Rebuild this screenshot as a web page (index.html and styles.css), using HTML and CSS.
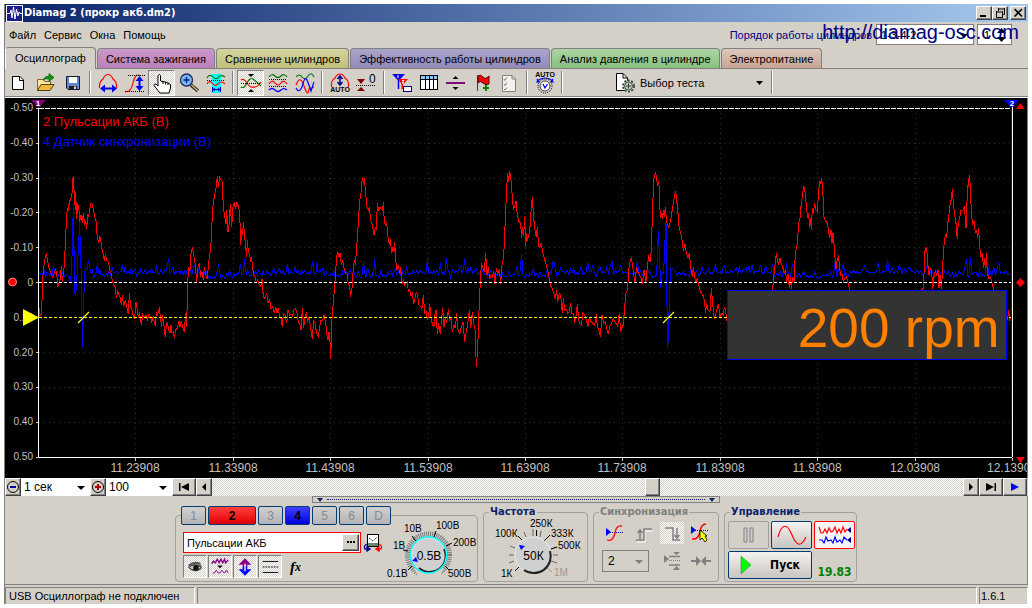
FILE: index.html
```html
<!DOCTYPE html>
<html lang="ru">
<head>
<meta charset="utf-8">
<title>Diamag 2 (прокр акб.dm2)</title>
<link rel="stylesheet" href="styles.css">
</head>
<body>
<div class="window">
  <header class="titlebar">
    <svg class="logo" width="17" height="17" viewBox="0 0 17 17"><rect width="17" height="17" fill="#fff"/><rect x="1" y="1" width="15" height="15" fill="#1c1c8c"/><path d="M1 8.500H4L5 5L6 13L7.500 2L9 14L10.500 4L12 11L13 7L14 8.500H16" fill="none" stroke="#fff"/></svg>
    <h1>Diamag 2 (прокр акб.dm2)</h1>
    <button class="cap" aria-label="Свернуть"><svg width="11" height="10"><path d="M1 8H7" stroke="#000" stroke-width="2"/></svg></button>
    <button class="cap" aria-label="Восстановить"><svg width="11" height="10"><path d="M3 1H10M3.500 0V3M9.500 0V6.500H7M1 4H8M1.500 3V9.500H7.500V3" fill="none" stroke="#000"/></svg></button>
    <button class="cap close" aria-label="Закрыть"><svg width="11" height="10"><path d="M1.500 1L9 8.500M9 1L1.500 8.500" stroke="#000" stroke-width="1.600"/></svg></button>
  </header>

  <div class="menubar">
    <nav class="menu"><button>Файл</button><button>Сервис</button><button>Окна</button><button>Помощь</button></nav>
    <label class="order" for="order">Порядок работы цилиндров</label>
    <span class="combo sunk order-box"><select id="order"><option>1-3-4-2</option></select></span>
    <span class="sunk spin"><input type="text" value="1" aria-label="Номер цилиндра"><svg width="9" height="14"><path d="M4.500 0L9 5H0ZM4.500 14L9 9H0Z"/></svg></span>
    <a class="site" href="#">http://diamag-osc.com</a>
  </div>

  <nav class="tabs">
    <button class="tab active">Осциллограф</button>
    <button class="tab pink">Система зажигания</button>
    <button class="tab olive">Сравнение цилиндров</button>
    <button class="tab violet">Эффективность работы цилиндров</button>
    <button class="tab green">Анализ давления в цилиндре</button>
    <button class="tab brown">Электропитание</button>
  </nav>

  <div class="toolbar">
    <button class="tool" aria-label="Новый"><svg viewBox="0 0 24 24"><path d="M5.500 5.500H13L16.500 9V18.500H5.500Z" fill="#fff" stroke="#000"/><path d="M12.500 5.500V9.500H16.500" fill="none" stroke="#000"/></svg></button>
    <button class="tool" aria-label="Открыть"><svg viewBox="0 0 24 24"><path d="M3.500 19V8.500H9L10.500 10.500H16.500V13" fill="#ffe89c" stroke="#806020"/><path d="M3.500 19.500L7 13.500H20L16 19.500Z" fill="#f0b840" stroke="#504010"/><path d="M9 9Q11 5 15 5V2.500L20 6.500L15 10.500V8Q12 7 9 9Z" fill="#0a960a" stroke="#004c00" stroke-width=".6"/></svg></button>
    <button class="tool" aria-label="Сохранить"><svg viewBox="0 0 24 24"><path d="M5.500 5.500H18.500V18.500H7L5.500 17Z" fill="#6088c8" stroke="#101838"/><rect x="8" y="6" width="8" height="6" fill="#fff"/><path d="M8 15H16V18.500H8Z" fill="#202020"/><path d="M13 15.500H15V18H13Z" fill="#ddd"/></svg></button>
    <i class="sep"></i>
    <button class="tool" aria-label="Размах по горизонтали"><svg viewBox="0 0 24 24"><path d="M3.500 17V14Q4 10 7 8Q9 3.500 12 3.500T17 8Q20 10 20.500 14V17" fill="none" stroke="#f00" stroke-width="1.200"/><path d="M6 17.500H19" stroke="#00e" stroke-width="2"/><path d="M4 17.500L9 13.500V21.500ZM21 17.500L16 13.500V21.500Z" fill="#00e"/></svg></button>
    <button class="tool" aria-label="Размах по вертикали"><svg viewBox="0 0 24 24"><path d="M2 20.500Q8 22 10 12T17 4.500" fill="none" stroke="#f00" stroke-width="1.200"/><path d="M5 4.500H22M2 20.500H22" stroke="#000" stroke-dasharray="1 1"/><path d="M16.500 7V18" stroke="#00e" stroke-width="2"/><path d="M16.500 5L12.500 10H20.500ZM16.500 20L12.500 15H20.500Z" fill="#00e"/></svg></button>
    <button class="tool pressed" aria-label="Рука"><svg viewBox="0 0 24 24"><path d="M8 13V4.500Q9.500 2.500 10.500 4.500V10L13 10.500L15.500 11L18 12L20.500 13.500V17L19 22H10L4 14.500Q4 12.500 6 13L8 15Z" fill="#fff" stroke="#000"/><path d="M13 10.500V13M15.500 11V13.500M18 12V14" stroke="#000"/></svg></button>
    <button class="tool" aria-label="Увеличить"><svg viewBox="0 0 24 24"><path d="M14 14L21 20" stroke="#202020" stroke-width="3.500"/><path d="M14.500 14L21 20" stroke="#e8c080" stroke-width="1.200"/><circle cx="9.500" cy="9" r="6" fill="#78b8f8" stroke="#202860" stroke-width="1.300"/><path d="M6.500 9H12.500M9.500 6V12" stroke="#002080" stroke-width="1.400"/></svg></button>
    <button class="tool" aria-label="Диапазон"><svg viewBox="0 0 24 24"><rect x="8" y="3" width="9" height="19" fill="#0ff"/><path d="M3 7Q5 3 8 5Q11 9 14 7Q16 3 21 6" fill="none" stroke="#070" stroke-width="1.200"/><path d="M3 13Q5 9 8 12Q11 16 14 13Q17 9 21 13" fill="none" stroke="#f00" stroke-width="1.200"/><path d="M3 9.500H21" stroke="#000" stroke-dasharray="1 1"/><path d="M8.500 16V21M16.500 16V21M9 18.500H16M11 17L9 18.500L11 20M14 17L16 18.500L14 20" fill="none" stroke="#00a"/></svg></button>
    <i class="sep"></i>
    <button class="tool pressed" aria-label="Совместить"><svg viewBox="0 0 24 24"><path d="M2 9Q5 7 8 12T14 16Q18 17 22 11" fill="none" stroke="#f00" stroke-width="1.200"/><path d="M2 16Q5 18 8 12Q11 6 14 8T22 15" fill="none" stroke="#070" stroke-width="1.200"/><path d="M2 12.500H22" stroke="#000" stroke-dasharray="1 1"/><path d="M9 3H15L12 6ZM12 18L15 21H9Z" fill="#000"/></svg></button>
    <button class="tool" aria-label="Разделить"><svg viewBox="0 0 24 24"><path d="M3 6Q6 2 9 5T15 5T21 6" fill="none" stroke="#070" stroke-width="1.200"/><path d="M3 13Q6 8 9 12T15 12T21 13" fill="none" stroke="#f00" stroke-width="1.200"/><path d="M3 19Q6 16 9 19T15 19T21 19" fill="none" stroke="#00f" stroke-width="1.200"/><path d="M3 8.500H21M3 15.500H21" stroke="#000" stroke-dasharray="1 1"/></svg></button>
    <button class="tool" aria-label="Наложить"><svg viewBox="0 0 24 24"><path d="M3 6Q6 2 9 6T15 5T21 6" fill="none" stroke="#070" stroke-width="1.200"/><path d="M3 14Q7 3 11 15T16 18L21 16" fill="none" stroke="#f00" stroke-width="1.200"/><path d="M3 17Q6 23 9 16Q12 4 14 9T18 20L21 11" fill="none" stroke="#00f" stroke-width="1.200"/></svg></button>
    <i class="sep"></i>
    <button class="tool" aria-label="Авто масштаб"><svg viewBox="0 0 24 24"><path d="M3.500 16V12Q4 9 7 7Q9 3 12 3T17 7Q20 9 20.500 12V16" fill="none" stroke="#f00" stroke-width="1.200"/><path d="M12 5V13M9.500 8L12 5L14.500 8M9.500 11L12 14L14.500 11" fill="none" stroke="#00008b" stroke-width="1.500"/><text class="tiny" x="12" y="21" text-anchor="middle">AUTO</text></svg></button>
    <button class="tool" aria-label="Ноль"><svg viewBox="0 0 24 24"><path d="M2 8H10L6 13ZM6 16L10 20H2Z" fill="#800000"/><path d="M1 14.500H21" stroke="#000" stroke-dasharray="1 1"/><text class="zero" x="14" y="12">0</text></svg></button>
    <i class="sep"></i>
    <button class="tool" aria-label="Маркеры"><svg viewBox="0 0 24 24"><path d="M2 3H15L8.500 10Z" fill="#00f"/><path d="M8.500 8V18" stroke="#00f" stroke-width="1.500"/><path d="M8 8H18L13 13.500V18H11.500V13Z" fill="#f00"/><path d="M8 4V7M12 9.500H14L12 12H14" fill="none" stroke="#fff"/><rect x="13.500" y="15.500" width="8" height="5" fill="#fff" stroke="#00008b"/></svg></button>
    <button class="tool" aria-label="Таблица"><svg viewBox="0 0 24 24"><rect x="3.500" y="4.500" width="17" height="14" fill="#fff" stroke="#000"/><path d="M4 5H20V8H4Z" fill="#90c8f8"/><path d="M4 8.500H20M8.500 5V18M12.500 5V18M16.500 5V18" stroke="#000"/></svg></button>
    <button class="tool" aria-label="Линия"><svg viewBox="0 0 24 24"><path d="M2 12H21" stroke="#800080" stroke-width="2"/><path d="M8.500 8H14.500L11.500 5ZM8.500 16H14.500L11.500 19Z"/></svg></button>
    <button class="tool" aria-label="Флаг"><svg viewBox="0 0 24 24"><path d="M6.500 4V20" stroke="#404040"/><path d="M7 5Q10 3 12 6T18 5V13Q15 15 12 12T7 12Z" fill="#f00" stroke="#500000"/><path d="M12 17H18M15 14V20" stroke="#008000" stroke-width="2"/></svg></button>
    <button class="tool" aria-label="Список"><svg viewBox="0 0 24 24"><path d="M4.500 4.500H14L17.500 8V20.500H4.500Z" fill="#f4f2ee" stroke="#808080"/><path d="M14 4.500V8H17.500" fill="none" stroke="#808080"/><path d="M6 8L7 9.500L9 6.500M6 13L7 14.500L9 11.500M6 18L7 19L9 16.500" fill="none" stroke="#808080"/></svg></button>
    <i class="sep"></i>
    <button class="tool" aria-label="Авто напряжение"><svg viewBox="0 0 24 24"><text class="tiny" x="12" y="6" text-anchor="middle">AUTO</text><path d="M4 10Q12 4 20 10M3 11L6 11L4 8M21 11L18 11L20 8" fill="none" stroke="#00f" stroke-width="1.200"/><circle cx="12" cy="15" r="7" fill="none" stroke="#000" stroke-dasharray="1 1"/><circle cx="12" cy="15" r="5" fill="#fff" stroke="#404040"/><path d="M10 13L12 17L14.500 13" fill="none" stroke="#00f" stroke-width="1.300"/></svg></button>
    <i class="sep"></i>
    <button class="test"><svg width="24" height="24" viewBox="0 0 24 24"><path d="M3.500 2.500H10L14.500 7V19.500H3.500Z" fill="#fff" stroke="#000"/><path d="M10 2.500V7H14.500" fill="none" stroke="#000"/><circle cx="15.500" cy="15" r="5.500" fill="#d4e0d0" stroke="#404840" stroke-width="2" stroke-dasharray="2 1.500"/><circle cx="15.500" cy="15" r="4" fill="#c4ccc0" stroke="#405040"/><path d="M13 15H18M15.500 12.500V17.500" stroke="#304030"/></svg><span>Выбор теста</span><svg class="drop" width="7" height="4"><path d="M0 0H7L3.500 4Z"/></svg></button>
    <i class="sep"></i>
  </div>

  <main class="scope">
    <svg class="plot" viewBox="5 98 1022 380">
      <g class="grid">
        <path d="M135.500 108V457M233.500 108V457M330.500 108V457M428.500 108V457M525.500 108V457M622.500 108V457M720.500 108V457M817.500 108V457M915.500 108V457"/>
        <path d="M39 143.500H1011M39 178.500H1011M39 212.500H1011M39 247.500H1011M39 352.500H1011M39 387.500H1011M39 422.500H1011"/>
      </g>
      <path d="M39 108.500H1011" stroke="#fff" stroke-dasharray="5 1"/>
      <path d="M38.500 108V457.500H1012" fill="none" stroke="#fff"/>
      <path d="M36 108.500H38M36 143.500H38M36 178.500H38M36 212.500H38M36 247.500H38M36 282.500H38M36 317.500H38M36 352.500H38M36 387.500H38M36 422.500H38M36 457.500H38M135.500 458V461M233.500 458V461M330.500 458V461M428.500 458V461M525.500 458V461M622.500 458V461M720.500 458V461M817.500 458V461M915.500 458V461M1012.500 458V461" stroke="#ccc"/>
      <g class="ylab">
        <text x="33" y="111">-0.50</text><text x="33" y="146">-0.40</text><text x="33" y="181">-0.30</text><text x="33" y="216">-0.20</text><text x="33" y="251">-0.10</text><text x="33" y="286">0</text><text x="33" y="321">0.10</text><text x="33" y="356">0.20</text><text x="33" y="390">0.30</text><text x="33" y="425">0.40</text><text x="33" y="460">0.50</text>
      </g>
      <g class="xlab">
        <text x="135" y="472">11.23908</text><text x="233" y="472">11.33908</text><text x="330" y="472">11.43908</text><text x="428" y="472">11.53908</text><text x="525" y="472">11.63908</text><text x="622" y="472">11.73908</text><text x="720" y="472">11.83908</text><text x="817" y="472">11.93908</text><text x="915" y="472">12.03908</text><text x="1012" y="472">12.13908</text>
      </g>
      <text class="legend red" x="43" y="126">2 Пульсации АКБ (В)</text>
      <text class="legend blue" x="43" y="146">4 Датчик синхронизации (В)</text>

      <g class="trace blue-line" transform="translate(0 150) scale(.33333)">
        <polyline points="117,365 121,372 125,366 129,378 133,364 137,380 141,366 146,370 150,376 154,358 157,378 160,346 163,358 167,372 171,364 175,378 179,364 184,372 188,368 192,380 196,376 200,374 205,380 209,385 212,400 216,320 218,250 220,162 222,290 223,425 227,438 231,375 235,295 239,220 242,330 245,400 247,590 250,500 253,390 256,352 261,356 265,332 269,352 273,370 277,362 281,382 285,374 289,366 292,338 296,372 300,362 304,378 309,372 313,380 318,370 322,378 327,366 331,374 336,352 340,368 345,370 350,364 354,372 359,366 364,364 367,346 371,370 375,352 380,370 385,364 390,372 394,354 398,372 402,358 406,364 410,378 415,365 419,372 422,355 427,370 431,368 436,360 441,372 446,362 450,370 454,356 460,370 465,368 469,346 473,370 478,372 483,358 488,370 492,360 497,366 501,352 506,328 510,370 515,362 519,352 523,374 527,362 531,370 536,364 540,372 545,360 549,376 553,362 557,374 562,360 566,368 570,350 575,376 579,358 584,344 588,370 592,376 596,362 600,378 605,368 609,380 614,370 618,362 623,376 627,385 632,380 637,386 641,378 646,384 650,370 656,342 661,380 665,384 669,376 674,386 679,372 684,380 688,362 693,376 697,382 702,374 707,380 711,370 716,372 721,343 725,372 729,374 734,328 739,374 743,360 748,376 753,378 757,358 762,370 767,366 772,374 776,360 781,372 785,378 789,364 793,374 798,372 802,362 807,370 812,376 817,366 821,354 826,374 830,368 834,362 839,356 844,370 849,364 853,372 858,366 862,342 867,372 872,364 877,370 882,366 886,352 891,370 895,364 900,376 905,362 909,372 914,362 919,370 924,366 929,374 934,360 938,334 942,370 947,374 951,340 955,370 960,356 964,370 968,354 973,376 978,362 982,374 987,376 991,370 996,378 1001,362 1005,380 1010,376 1015,378 1020,372 1025,378 1030,356"/>
        <polyline transform="translate(1032 0)" points="0,364 5,370 10,366 14,374 19,360 24,374 29,364 33,376 38,382 43,362 48,382 53,382 59,337 62,370 66,380 71,354 76,372 80,382 85,370 88,380 92,328 96,378 101,376 106,384 111,360 116,380 121,376 126,382 131,370 135,374 140,362 145,378 149,362 154,358 159,376 164,364 169,374 174,360 178,376 183,372 188,354 193,374 198,368 203,376 208,362 213,370 218,362 223,370 228,360 233,368 238,366 243,372 247,360 250,328 254,370 259,364 264,372 269,362 274,372 279,360 284,376 289,340 293,370 298,368 302,374 307,324 311,358 315,366 320,382 325,360 330,368 335,362 340,368 344,358 350,346 354,370 359,352 363,328 367,370 372,354 377,366 381,352 386,370 392,362 397,356 401,372 406,368 411,376 416,360 421,374 426,364 431,380 436,370 441,360 446,378 450,370 455,380 460,370 465,366 470,378 475,370 480,382 485,376 489,382 494,366 499,380 504,372 509,378 514,366 519,352 522,378 527,374 533,313 537,372 542,382 547,374 552,382 557,370 562,376 568,358 573,378 578,370 583,380 588,366 593,380 598,374 603,380 608,366 613,384 618,362 622,370 628,330 633,352 638,376 643,374 649,354 654,366 659,362 664,370 669,360 674,372 679,358 684,370 689,356 694,374 699,368 704,372 712,348 716,372 721,370 726,366 731,336 736,364 741,366 746,346 751,370 757,378 762,364 768,350 773,370 778,362 783,370 788,352 793,370 798,352 804,334 809,374 814,360 819,370 825,362 830,344 835,366 840,370 845,364 850,372 855,368 860,372 865,374 870,366 875,376 880,332 885,374 890,362 895,376 900,370 906,374 911,362 916,360 922,378 927,382 933,380 938,374 943,242 947,330 950,415 954,370 959,367 962,290 966,215 968,400 971,594 974,540 976,440 980,355 985,356 990,360 995,366 1000,378 1005,366 1010,374 1015,372 1018,362 1023,378 1028,374"/>
        <polyline transform="translate(2064 0)" points="0,375 4,380 9,350 13,374 18,372 22,368 27,360 32,376 37,372 42,352 47,368 52,372 57,364 62,356 67,370 72,372 77,362 82,346 87,366 92,368 97,366 102,370 107,350 110,346 114,372 119,364 124,370 129,360 134,366 139,362 145,354 149,370 154,352 159,370 164,362 170,358 174,350 178,366 183,348 187,370 192,346 197,370 202,362 208,366 213,362 218,346 223,372 228,370 233,345 238,368 243,368 248,370 254,342 258,376 262,380 267,370 272,376 277,366 282,380 287,360 292,376 296,340 301,370 306,380 310,366 313,342 318,372 323,374 328,382 333,368 338,382 343,374 348,365 353,380 358,376 363,384 368,376 373,382 380,366 385,380 390,386 396,382 401,378 407,376 413,380 418,372 423,378 428,366 433,380 437,370 442,332 446,382 451,360 456,376 461,362 466,340 471,376 476,372 480,382 486,364 491,370 497,362 502,370 507,364 513,370 518,368 523,362 530,348 534,364 539,362 545,370 550,366 556,370 562,368 567,360 571,338 576,368 581,370 587,362 593,368 599,332 603,362 608,368 613,350 618,372 623,362 628,368 634,346 638,356 643,370 648,354 653,368 659,356 665,352 670,366 676,364 682,370 687,360 692,370 697,362 702,374 708,372 713,362 719,340 724,380 729,360 734,366 738,378 744,362 750,376 755,374 760,366 765,376 770,364 776,372 782,366 787,380 793,370 798,382 803,370 808,378 813,362 819,370 825,374 830,358 836,328 840,380 843,382 847,322 852,374 858,368 864,366 870,380 875,362 881,378 886,370 891,380 897,318 902,374 907,366 912,376 917,350 922,374 927,358 932,336 937,370 943,368 948,372 953,362 960,374 966,370"/>
      </g>
      <g class="trace red-line" transform="translate(0 150) scale(.33333)">
        <polyline points="117,475 119,500 124,492 127,430 128,388 131,352 134,330 137,318 139,312 142,325 145,345 149,362 154,372 158,382 162,372 166,360 170,365 173,412 177,400 181,385 184,348 187,396 190,370 193,345 196,285 199,215 202,173 205,182 208,155 212,148 216,130 218,95 220,77 222,118 226,180 227,125 230,208 233,160 237,182 239,215 243,195 247,218 250,190 254,226 257,212 260,236 263,195 266,200 269,178 273,160 277,162 281,185 285,205 288,213 289,232 292,262 296,280 299,258 302,270 306,298 310,312 313,332 316,312 320,330 326,335 329,360 333,370 337,392 341,405 345,410 349,443 353,425 357,435 360,440 364,465 367,435 371,468 376,450 380,470 385,493 388,430 392,470 396,480 400,500 404,505 408,455 412,480 415,500 419,490 424,526 428,492 433,502 438,495 442,510 447,492 451,500 455,515 460,498 463,520 466,525 469,485 473,495 478,472 481,500 485,530 487,495 491,520 496,562 499,525 502,515 506,540 510,550 513,525 516,548 520,545 523,565 527,540 532,535 537,512 540,530 544,512 548,530 553,545 557,490 560,530 563,395 566,355 570,362 573,312 577,292 582,320 586,345 590,398 594,350 598,340 602,380 606,365 610,390 613,350 617,375 622,388 625,348 628,320 632,300 635,240 638,175 641,152 645,128 649,110 652,77 655,110 659,82 663,90 666,92 669,150 672,185 675,205 678,222 680,180 684,245 687,225 691,162 695,232 699,170 703,160 707,178 711,155 715,170 719,185 722,285 725,240 728,255 730,215 734,260 737,288 740,320 742,270 745,305 749,315 752,335 754,320 757,345 761,375 765,380 769,398 773,390 778,405 782,410 786,388 790,440 795,445 800,428 804,460 809,450 813,478 818,470 823,490 827,470 831,488 835,475 839,500 843,505 847,532 850,490 855,495 860,520 864,480 869,495 873,492 878,498 882,480 887,475 891,490 895,515 899,520 903,540 907,475 911,535 915,500 919,490 923,515 927,500 931,530 937,568 941,510 945,520 950,550 955,560 959,530 963,510 968,512 972,495 977,520 981,555 984,570 987,545 990,575 992,628 994,570 997,480 1000,462 1003,420 1006,380 1010,320 1013,305 1017,320 1020,310 1024,345 1028,330 1032,355"/>
        <polyline transform="translate(1032 0)" points="0,355 5,370 9,372 13,402 17,410 20,440 24,415 27,370 31,330 34,345 38,295 41,250 44,200 47,155 51,130 55,80 58,100 61,85 65,130 69,170 73,180 76,172 80,210 85,225 90,255 94,230 97,240 100,160 104,182 108,170 112,178 116,182 118,155 121,220 125,225 128,215 132,262 136,285 139,268 143,310 147,290 151,305 152,275 155,330 159,360 163,345 168,372 170,352 174,402 178,390 182,405 186,400 190,395 193,425 197,418 201,438 205,430 209,462 213,445 217,425 221,440 225,465 230,470 234,475 238,435 242,490 247,485 250,510 254,500 257,462 262,510 266,525 270,530 272,495 276,480 280,552 284,520 289,552 292,515 296,475 300,530 304,500 308,518 313,478 317,510 321,505 325,545 330,525 334,535 338,490 342,540 348,550 352,530 357,515 362,575 366,550 370,530 376,480 380,535 385,487 389,520 393,535 397,650 401,600 404,505 407,440 410,370 413,340 417,355 421,365 425,310 429,375 433,350 437,388 441,375 445,380 449,362 453,402 457,355 461,370 466,360 470,402 474,345 477,330 480,300 483,230 486,160 489,100 491,70 494,95 497,62 501,90 505,140 508,178 512,170 516,152 520,195 525,215 530,220 533,265 536,230 539,258 542,198 545,290 548,250 550,272 554,258 557,240 560,210 562,165 565,142 569,205 573,240 577,262 580,232 584,290 588,290 592,278 596,310 600,320 604,335 608,350 612,365 616,385 620,408 625,415 630,432 634,448 638,420 641,455 646,430 650,435 655,490 658,445 662,480 667,478 671,490 676,485 680,460 684,490 688,490 692,518 696,500 700,462 704,510 708,522 712,525 717,488 722,495 727,510 732,528 736,500 741,515 747,520 752,525 757,492 760,530 764,540 769,560 774,495 779,520 784,515 789,540 793,553 797,530 802,520 808,505 813,515 817,522 821,530 826,488 830,545 835,530 838,525 842,470 846,430 850,420 853,385 856,340 862,325 866,345 869,375 873,395 878,350 882,365 886,375 890,380 895,402 900,360 906,395 910,350 914,315 918,335 922,300 925,200 928,120 930,85 934,67 937,80 940,105 943,98 946,110 948,180 950,205 954,190 955,208 958,180 961,200 964,172 967,205 970,225 975,232 980,210 984,185 988,160 992,135 995,122 998,150 1002,190 1006,240 1010,245 1014,270 1018,302 1023,282 1027,310 1032,325"/>
        <polyline transform="translate(2064 0)" points="0,325 4,308 8,350 13,380 16,350 20,382 24,400 28,385 32,405 37,425 42,432 47,440 53,488 56,458 60,480 66,485 70,415 74,460 79,508 84,490 91,462 96,500 101,490 106,495 109,470 113,480 116,512 150,500 200,520 240,510 253,420 256,400 259,360 262,340 265,308 268,330 272,345 276,325 280,342 284,350 288,370 292,362 296,395 300,372 304,415 307,380 310,418 314,380 318,395 321,330 324,300 327,285 330,250 332,220 336,205 339,170 343,140 347,108 351,125 355,165 359,205 362,190 365,235 368,205 370,240 373,175 376,190 380,158 384,180 388,185 391,140 395,92 398,100 401,85 404,120 406,155 408,200 412,212 418,218 421,235 425,265 429,240 432,280 435,250 439,290 442,340 444,358 448,325 452,315 454,350 458,375 462,372 466,395 470,385 475,380 479,395 485,420 520,480 600,510 690,510 700,420 706,415 708,370 711,305 716,290 719,340 723,375 727,355 731,360 734,418 738,380 742,360 746,375 750,360 753,415 756,375 760,418 763,375 766,310 769,275 772,255 776,262 780,215 784,185 787,155 790,150 793,118 796,160 800,195 804,220 808,268 811,215 815,205 819,180 824,182 829,168 834,235 836,180 839,105 841,110 844,75 847,110 850,185 854,225 858,212 862,250 866,240 869,265 872,235 875,290 879,320 883,312 887,355 890,325 893,355 895,308 898,370 903,385 908,382 912,400 917,418 940,470 955,500 959,510 962,480 965,512 968,500"/>
      </g>
      <path d="M39 282.500H1011" stroke="#fff" stroke-dasharray="3 2"/>
      <path d="M39 317.500H1011" stroke="#ff0" stroke-dasharray="3 2"/>
      <path d="M78 323L89 312M663 323L674 312" stroke="#ff0" stroke-width="1.300"/>
      <path d="M1011.500 105V457" stroke="#00f"/><path d="M1012.500 105V457" stroke="#fff"/>
      <path d="M23 309L39 317.500L23 326Z" fill="#ff0"/>
      <circle cx="12.500" cy="282" r="4" fill="#f00" stroke="#f88"/>
      <path d="M31 100H46L38.500 108Z" fill="#800080"/>
      <path d="M1004 100H1019L1011.500 108Z" fill="#00f"/>
      <text class="mark" x="38" y="106">1</text><text class="mark" x="1012" y="106">2</text>
      <path d="M1020.500 103L1025 109H1016ZM1020.500 278L1025 282.500L1020.500 287L1016 282.500ZM1016 457H1025L1020.500 463Z" fill="#f00"/>
    </svg>
    <output class="rpm">200 rpm</output>
  </main>

  <div class="scrollrow">
    <button class="raised b16" aria-label="Сжать"><svg width="14" height="14"><circle cx="7" cy="7" r="5.500" fill="none" stroke="#000"/><path d="M4 7H10" stroke="#00a" stroke-width="2"/></svg></button>
    <span class="combo w-time"><select aria-label="Длительность"><option>1 сек</option></select></span>
    <button class="raised b16" aria-label="Растянуть"><svg width="14" height="14"><circle cx="7" cy="7" r="5.500" fill="none" stroke="#000"/><path d="M4 7H10M7 4V10" stroke="#a00" stroke-width="2"/></svg></button>
    <span class="combo w-scale"><select aria-label="Масштаб"><option>100</option></select></span>
    <button class="raised b24" aria-label="В начало"><svg width="12" height="8"><path d="M1 0H2.500V8H1ZM11 0V8L3 4Z"/></svg></button>
    <button class="raised b16" aria-label="Назад"><svg width="6" height="8"><path d="M5 0V8L1 4Z"/></svg></button>
    <div class="track"><i class="lead"></i><button class="raised thumb" aria-label="Позиция"></button></div>
    <button class="raised b16" aria-label="Вперёд"><svg width="6" height="8"><path d="M1 0V8L5 4Z"/></svg></button>
    <button class="raised b24" aria-label="В конец"><svg width="12" height="8"><path d="M1 0V8L9 4ZM9.500 0H11V8H9.500Z"/></svg></button>
    <button class="raised b24" aria-label="Воспроизвести"><svg width="10" height="8"><path d="M1 0V8L9 4Z" fill="#00f"/></svg></button>
  </div>

  <section class="panel">
    <div class="splitter"><svg width="6" height="4"><path d="M0 0H6L3 4Z"/></svg><i></i><svg width="6" height="4"><path d="M0 0H6L3 4Z"/></svg></div>
    <div class="groups">
      <fieldset class="group channels">
        <legend class="chans">
          <button class="ch off">1</button><button class="ch on-red">2</button><button class="ch off">3</button><button class="ch on-blue">4</button><button class="ch off">5</button><button class="ch off">6</button><button class="ch off">D</button>
        </legend>
        <div class="chan-body">
          <div class="chan-left">
            <div class="name-row">
              <span class="name"><input type="text" value="Пульсации АКБ" aria-label="Название канала"><button class="raised dots" aria-label="Выбрать"><svg width="10" height="3"><path d="M1 0H3V2H1ZM4 0H6V2H4ZM7 0H9V2H7Z"/></svg></button></span>
              <button class="flat" aria-label="Инвертировать"><svg width="20" height="20" viewBox="0 0 20 20"><rect x="4.500" y="1.500" width="11" height="12" fill="#fff" stroke="#000"/><path d="M5 10H15V13H5Z" fill="#688868"/><path d="M6 5L10 8L14 4" fill="none" stroke="#000" stroke-dasharray="1 1"/><path d="M4 11Q0 13 2 16H6M4 14V18L7 16Z" fill="none" stroke="#000090" stroke-width="1.300"/><path d="M16 11Q20 13 18 16H14M16 14V18L13 16Z" fill="none" stroke="#f00" stroke-width="1.300"/></svg></button>
            </div>
            <div class="opts">
              <button class="opt" aria-label="Видимость"><svg viewBox="0 0 24 22"><path d="M5 12Q10 6 19 9V14Q14 18 8 15Z" fill="#777"/><path d="M5 12Q11 7 19 12Q14 17 8 14Z" fill="#ccc" stroke="#222"/><circle cx="13" cy="12.500" r="3" fill="#111"/><path d="M5 10Q11 5 18 8" fill="none" stroke="#555" stroke-width="2"/></svg></button>
              <button class="opt" aria-label="Сигнал"><svg viewBox="0 0 24 22"><path d="M3 8L5 5L7 7L9 3L11 7L13 3L15 7L17 3L18 7L21 4" fill="none" stroke="#808" stroke-width="1.500"/><path d="M9 10H15L12 13Z"/><path d="M4 18H6L8 15L10 18H12L14 15L16 18H17L19 15L21 18" fill="none" stroke="#808"/></svg></button>
              <button class="opt" aria-label="Сдвиг"><svg viewBox="0 0 24 22"><path d="M12 2L19 9H14.500V12H9.500V9H5Z" fill="#808"/><path d="M12 21L19 14H14.500V11H9.500V14H5Z" fill="#00f"/><path d="M12 8V16" stroke="#fff" stroke-width="1.500"/></svg></button>
              <button class="opt" aria-label="Уровни"><svg viewBox="0 0 24 22"><path d="M4 5.500H21M4 17.500H21" stroke="#000"/><path d="M4 11.500H21" stroke="#000" stroke-dasharray="2 1"/></svg></button>
              <button class="flat fx" aria-label="Функция"><em>f</em><sub>x</sub></button>
            </div>
          </div>
          <svg class="dial" width="90" height="64" viewBox="388 519 90 64">
            <circle class="ticks" cx="429.500" cy="556" r="21"/>
            <path d="M415 569L420 580H440L445 569L430 556Z" fill="#d4d0c8"/>
            <path d="M409 571L413 567M409 552L404 551M417 542L413 537M435 538L437 532M447 547L453 544M446 567L450 571" stroke="#000"/>
            <circle class="knob" cx="429.500" cy="556" r="17"/>
            <path class="shade" d="M445 550A16 16 0 0 1 420 569"/>
            <circle cx="429.500" cy="556" r="18" fill="none" stroke="#0ff" stroke-width="1.500"/>
            <path d="M413 562L417 558L419 563Z" fill="#00f"/>
            <text class="big" x="430" y="561">0.5В</text>
            <g class="dl"><text x="388" y="578">0.1В</text><text x="394" y="550">1В</text><text x="405" y="533">10В</text><text x="437" y="530">100В</text><text x="454" y="547">200В</text><text x="449" y="578">500В</text></g>
          </svg>
        </div>
      </fieldset>

      <fieldset class="group freq">
        <legend>Частота</legend>
        <svg class="dial freq-dial" width="102" height="64" viewBox="484 518 102 64">
          <path d="M515 572L520 567M509 564L514 562M509 556H514M510 547L515 549M518 537L523 542M524 533L526 538M533 530V537M541 532L540 538M550 536L544 542M557 548L551 550M553 556H558M557 564L551 562" stroke="#666"/>
          <path d="M515 572L520 567M518 537L523 542M536.500 531V537M550 536L544 542M557 548L551 550" stroke="#000"/><path d="M546 568L552 573" stroke="#999"/>
          <circle class="knob" cx="533" cy="556" r="18"/>
          <path class="shade" d="M550 552A17 17 0 0 1 524 571"/>
          <path d="M519 546L525 547L521 551Z" fill="#00f"/>
          <text class="big" x="533.500" y="561">50К</text>
          <g class="dl"><text x="501" y="578">1К</text><text x="495" y="538">100К</text><text x="530" y="528">250К</text><text x="551" y="538">333К</text><text x="558" y="550">500К</text><text x="554" y="577" fill="#999">1М</text></g>
        </svg>
      </fieldset>

      <fieldset class="group sync">
        <legend class="dim">Синхронизация</legend>
        <div class="sync-grid">
          <button class="flat s" aria-label="Уровень"><svg viewBox="0 0 22 22"><path d="M3 6L8 10L3 14Z" fill="#00f"/><path d="M7 10.500H20" stroke="#009" stroke-dasharray="1 1"/><path d="M4 18Q10 20 12 11Q13 3 19 4" fill="none" stroke="#f00" stroke-width="1.300"/></svg></button>
          <button class="flat s" aria-label="Фронт"><svg viewBox="0 0 22 22"><path d="M4 19H12V8H20" transform="translate(1 1)" fill="none" stroke="#fff"/><path d="M4 18H12V7H20M8 17V9M5.500 11L8 8L10.500 11" fill="none" stroke="#808080" stroke-width="1.500"/></svg></button>
          <button class="flat s dither" aria-label="Спад"><svg viewBox="0 0 22 22"><path d="M4 6H12V18H19M16 6V15M13.500 13L16 16L18.500 13" fill="none" stroke="#808080" stroke-width="1.500"/></svg></button>
          <button class="flat s" aria-label="Выбор точки"><svg viewBox="0 0 22 22"><path d="M1 4L6 8L1 12Z" fill="#00f"/><path d="M5 8.500H19" stroke="#009" stroke-dasharray="1 1"/><path d="M2 17Q8 18 10 10Q11 2 16 2" fill="none" stroke="#f00" stroke-width="1.500"/><path d="M10 8V18L12 16L15 20L17 18L15 14H17Z" fill="#ff0" stroke="#000" stroke-width=".8"/></svg></button>
          <span class="combo dim-combo"><select aria-label="Канал" disabled><option>2</option></select></span>
          <button class="flat s" aria-label="Гистерезис"><svg viewBox="0 0 22 22"><path d="M3 5L8 9L3 13ZM12 2H19L15.500 5ZM12 20H19L15.500 16Z" fill="#808080"/><path d="M8 6.500H19M8 15H19" stroke="#808080" stroke-width="1.500"/><path d="M8 10.500H19" stroke="#808080" stroke-dasharray="1 1"/></svg></button>
          <button class="flat s" aria-label="Центр"><svg viewBox="0 0 22 22"><path d="M1 10H6V6L11 11L6 16V12H1ZM21 10H16V6L11 11L16 16V12H21Z" fill="#808080"/></svg></button>
        </div>
      </fieldset>

      <fieldset class="group ctrl">
        <legend>Управление</legend>
        <div class="ctrl-grid">
          <button class="cb pause" aria-label="Пауза"><svg width="12" height="16"><path d="M1 1H4V15H1ZM7 1H10V15H7Z" fill="#ccc" stroke="#808080"/></svg></button>
          <button class="cb" aria-label="Один кадр"><svg width="32" height="22"><path d="M2 13C6 -1 11 -1 16 11S25 23 30 13" fill="none" stroke="#f00" stroke-width="1.200"/></svg></button>
          <button class="cb live" aria-label="Непрерывно"><svg width="34" height="22"><path d="M1 3L3 9L5 9L7 5L9 9L11 4L13 8L15 7L17 3L19 9L21 5L23 9L25 3L27 8L29 5" fill="none" stroke="#f00" stroke-width="1.200"/><path d="M1 16H4L6 19L8 13L10 17L13 16L15 19L17 13L19 18L22 16L24 19L26 13L29 16" fill="none" stroke="#00f" stroke-width="1.200"/><path d="M33 3V9L29 6ZM33 13V19L29 16Z" fill="#008"/></svg></button>
          <button class="cb run"><svg width="12" height="20"><path d="M1 1V19L11 10Z" fill="#0f0" stroke="#484" stroke-width=".6"/></svg><span>Пуск</span></button>
          <output class="value">19.83</output>
        </div>
      </fieldset>
    </div>
  </section>

  <footer class="status">
    <span class="cell first">USB Осциллограф не подключен</span>
    <span class="cell mid"></span>
    <span class="cell ver">1.6.1</span>
  </footer>
</div>
</body>
</html>
```
FILE: styles.css
```css
* { box-sizing: border-box; }
body {
  margin: 0;
  padding: 4px;
  background: #fff;
  color: #000;
  font: 11px/14px "Liberation Sans", Arial, sans-serif;
}
button, input, select { font: inherit; color: inherit; margin: 0; padding: 0; border: 0; background: none; border-radius: 0; }
button { display: inline-flex; align-items: center; justify-content: center; white-space: nowrap; }
svg { display: block; flex: none; }
.window { background: #d4d0c8; border-left: 1px solid #808080; }

.titlebar { display: flex; align-items: center; height: 18px; padding-right: 2px; background: linear-gradient(90deg, #0a246a, #a6caf0); }
.titlebar h1 { flex: 1; margin: 0 0 0 1px; color: #fff; font: bold 11px/16px "DejaVu Sans Condensed", "DejaVu Sans", sans-serif; }
.logo { margin-left: 1px; }
.cap, .raised { background: #d4d0c8; border: 1px solid; border-color: #fff #404040 #404040 #fff; box-shadow: inset -1px -1px #808080; }
.cap { width: 16px; height: 14px; }
.close { margin-left: 2px; }

.menubar { position: relative; display: flex; align-items: center; height: 25px; padding-right: 16px; }
.menu { display: flex; flex: 1; gap: 8px; padding-left: 4px; }
.order { margin-right: 4px; color: #000080; }
.combo { position: relative; display: inline-flex; background: #fff; font-size: 12px; }
.combo select { width: 100%; appearance: none; padding: 0 16px 0 3px; outline: 0; }
.combo::after { content: ""; position: absolute; right: 5px; top: 50%; margin-top: -1px; border: 4px solid transparent; border-top-color: #000; border-bottom: 0; pointer-events: none; }
.sunk { height: 21px; background: #fff; border: 1px solid #808080; }
.order-box { width: 98px; margin-right: 3px; font-size: 11px; }
.order-box select { padding-left: 4px; }
.spin { display: flex; align-items: center; width: 35px; padding-right: 5px; }
.spin input { width: 100%; min-width: 0; padding-left: 6px; }
.site { position: absolute; right: 9px; top: 0; color: #000080; font-size: 20px; line-height: 20px; text-decoration: none; }

.tabs { display: flex; align-items: flex-end; gap: 1px; height: 22px; border-bottom: 1px solid #808080; }
.tab { height: 20px; padding: 0 8px; border: 1px solid #808080; border-bottom: 0; border-radius: 4px 4px 0 0; }
.active { height: 22px; padding: 0 9px 2px; margin-bottom: -1px; background: #d4d0c8; border-left-color: #fff; }
.pink { background: linear-gradient(#cc9acc, #b880b8); }
.olive { background: linear-gradient(#d4d4a0, #c0c078); }
.violet { background: linear-gradient(#aca6cc, #9088b8); }
.green { background: linear-gradient(#acd4a4, #88c080); }
.brown { background: linear-gradient(#dcc8bc, #c8a494); }

.toolbar { display: flex; align-items: center; height: 28px; border-bottom: 1px solid #808080; box-shadow: 0 1px #fff; }
.tool { width: 27px; height: 26px; }
.tool svg { width: 24px; height: 24px; }
.pressed, .opt { border: 1px solid; border-color: #808080 #fff #fff #808080; }
.pressed, .opt, .dither, .track { background: repeating-conic-gradient(#fff 0 25%, #d4d0c8 0 50%) 0 0 / 2px 2px; }
.sep { flex: none; width: 2px; height: 23px; margin: 0 3px; border-left: 1px solid #808080; border-right: 1px solid #fff; }
.test { width: 202px; height: 26px; padding: 0 5px 0 47px; justify-content: flex-start; gap: 3px; }
.drop { margin-left: auto; }
.tiny { font: bold 7px "Liberation Sans", sans-serif; }
.zero { font-size: 12px; }

.scope { position: relative; margin-top: 1px; background: #000; border-right: 1px solid #808080; }
.plot { width: 100%; height: auto; }
.plot text { font-family: "Liberation Sans", Arial, sans-serif; }
.grid { stroke: #34340c; stroke-dasharray: 1 4; }
.ylab { font-size: 10px; fill: #c0c0c0; text-anchor: end; }
.xlab { font-size: 12px; fill: #c0c0c0; text-anchor: middle; }
.legend { font-size: 13px; }
.red { fill: #f00; }
.blue { fill: #00f; }
.mark { font-size: 8px; font-weight: bold; fill: #fff; text-anchor: middle; }
.trace polyline { fill: none; stroke-width: 1px; vector-effect: non-scaling-stroke; shape-rendering: crispEdges; }
.red-line { stroke: #f00; }
.blue-line { stroke: #00f; }
.rpm { position: absolute; left: 70.6%; top: 50.6%; width: 27.4%; height: 18.4%; display: flex; align-items: center; justify-content: flex-end; padding: 5px 6px 0 0; background: #333; border: 1px solid #00f; color: #ff8000; font-size: 55px; line-height: 60px; white-space: nowrap; }

.scrollrow { display: flex; height: 18px; padding-right: 1px; }
.b16 { width: 16px; }
.b24 { width: 24px; }
.w-time { width: 69px; }
.w-scale { width: 66px; }
.track { flex: 1; display: flex; }
.lead { flex: 435; }
.track::after { content: ""; flex: 305; }
.thumb { width: 15px; }

.panel { border-bottom: 1px solid #808080; border-right: 1px solid #808080; padding-bottom: 2px; }
.splitter { display: flex; align-items: center; gap: 4px; width: 408px; height: 7px; margin: 0 auto; padding: 0 4px; border: 1px solid #808080; fill: #0a246a; }
.splitter i { flex: 1; border-top: 1px dotted #0a246a; }
.groups { display: flex; justify-content: center; gap: 5px; padding-top: 3px; }
.group { min-width: 0; height: 76px; margin: 0; padding: 0; border: 1px solid #a0a0a0; border-radius: 4px; }
.group legend { padding: 0 1px; margin-left: 5px; color: #0a246a; font: bold 11px/12px "DejaVu Sans Condensed", "DejaVu Sans", sans-serif; }
.group .dim { color: #808080; }
.channels { width: 303px; }
.group .chans { display: flex; gap: 2px; padding: 0; font: 12px/14px "Liberation Sans", sans-serif; }
.ch { width: 25px; height: 19px; border: 1px solid #003c74; border-radius: 2px; color: #888; background: linear-gradient(#d0d0d0, #b4b4b8); }
.on-red { width: 48px; color: #000; font-weight: bold; background: linear-gradient(#ff4040, #e00000); }
.on-blue { color: #000; font-weight: bold; background: linear-gradient(#4040ff, #0000e0); }
.chan-body { display: flex; justify-content: space-between; }
.chan-left { padding: 7px 0 0 7px; }
.name-row { display: flex; gap: 2px; }
.name { display: flex; width: 178px; height: 21px; padding: 1px; background: #fff; border: 1px solid #f00; }
.name input { flex: 1; min-width: 0; padding-left: 2px; outline: 0; }
.dots { width: 17px; }
.opts { display: flex; gap: 1px; margin-top: 2px; }
.opt { width: 24px; height: 23px; }
.opt svg { width: 22px; height: 21px; }
.fx { padding-left: 7px; font: italic bold 15px/18px "Liberation Serif", serif; }
.fx sub { font-size: 12px; line-height: 12px; }
.dial { overflow: visible; margin-top: -7px; }
.dial text { font-family: "Liberation Sans", sans-serif; }
.freq-dial { margin-top: -1px; }
.ticks { fill: none; stroke: #777; stroke-width: 5; stroke-dasharray: 1 1; }
.knob { fill: #d0d0d0; stroke: #e8e8e8; }
.shade { fill: none; stroke: #222; stroke-width: 2; }
.dl { font-size: 10px; }
.big { font-size: 12px; text-anchor: middle; }
.freq { width: 105px; }
.sync { width: 126px; }
.sync-grid { display: grid; grid-template-columns: 24px 24px 24px 24px; gap: 5px; row-gap: 6px; padding: 4px 0 0 8px; }
.s { width: 24px; height: 22px; }
.s svg { width: 22px; height: 22px; }
.dim-combo { grid-column: span 2; width: 47px; height: 22px; background: #d4d0c8; border: 1px solid #808080; }
.dim-combo select { padding-left: 5px; color: #000; opacity: 1; }
.dim-combo::after { border-top-color: #808080; }
.ctrl { width: 133px; }
.ctrl-grid { display: grid; grid-template-columns: 41px 41px 41px; gap: 2px; padding: 3px 0 0 3px; }
.cb { height: 28px; border: 1px solid #003c74; border-radius: 2px; background: linear-gradient(#f4f2f0, #c8c4c0); }
.pause { border-color: #a0a0a0; background: #d4d0c8; }
.live { border-color: #f00; background: #f6f4f4; }
.run { grid-column: span 2; gap: 18px; font: bold 12px/14px "DejaVu Sans Condensed", "DejaVu Sans", sans-serif; }
.value { align-self: end; text-align: center; color: #008000; font: bold 12px/14px "DejaVu Sans Condensed", "DejaVu Sans", sans-serif; }

.status { display: flex; gap: 2px; padding-top: 2px; height: 19px; }
.cell { border: 1px solid; border-color: #808080 #fff #d4d0c8 #808080; padding: 1px 3px; line-height: 14px; white-space: nowrap; }
.first { width: 190px; }
.mid { flex: 1; }
.ver { width: 49px; padding-left: 1px; }
```
